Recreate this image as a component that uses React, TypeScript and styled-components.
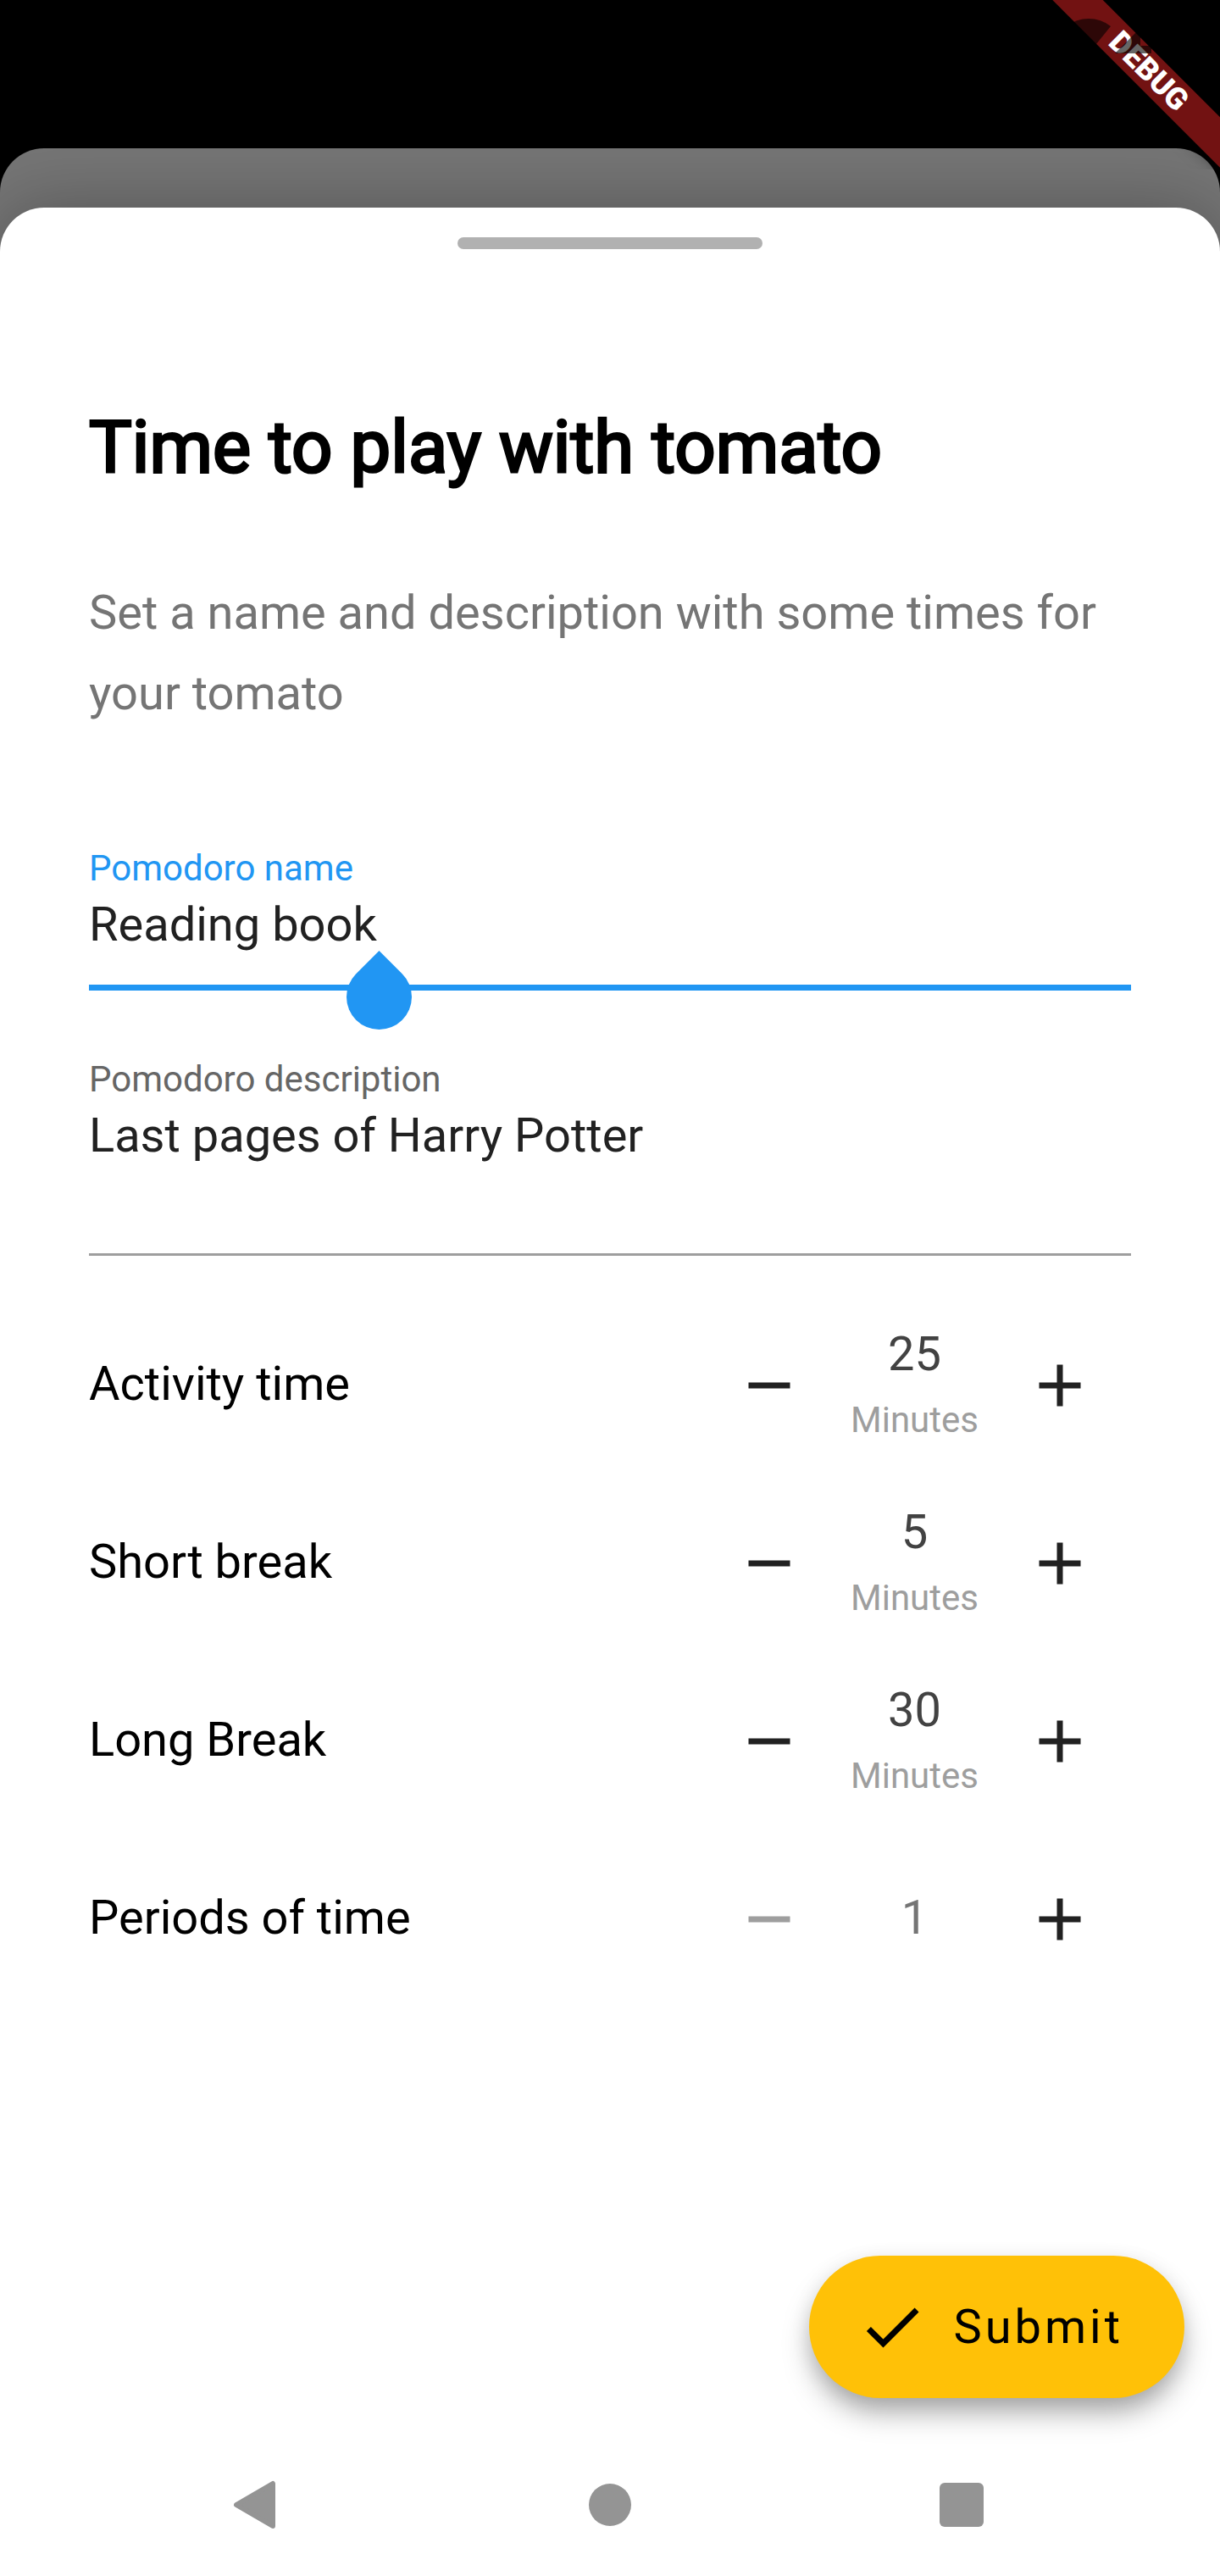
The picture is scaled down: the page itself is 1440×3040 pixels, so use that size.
import { useState } from "react";
import styled, { createGlobalStyle } from "styled-components";

const GlobalStyle = createGlobalStyle`
  *, *::before, *::after { box-sizing: border-box; }
  html, body, #root { height: 100%; }
  body { margin: 0; background: #000; font-family: Roboto, "Noto Sans", sans-serif; }
  button, input, textarea { font-family: inherit; }
`;

const Screen = styled.div`
  position: relative;
  display: flex;
  flex-direction: column;
  min-height: 100%;
  padding-top: 175px;
  background: #000;
  overflow: hidden;
`;

const Backdrop = styled.div`
  flex: 1;
  display: flex;
  flex-direction: column;
  padding-top: 70px;
  border-radius: 52px 52px 0 0;
  background: #757575;
  overflow: hidden;
`;

const Sheet = styled.main`
  flex: 1;
  display: flex;
  flex-direction: column;
  border-radius: 52px 52px 0 0;
  background: #fff;
  box-shadow: 0 0 84px rgba(0, 0, 0, 0.28);
`;

const Grabber = styled.div`
  width: 25%;
  height: 14px;
  margin: 35px auto 0;
  border-radius: 7px;
  background: #b1b1b1;
`;

const Form = styled.form`
  flex: 1;
  display: flex;
  flex-direction: column;
`;

const Content = styled.div`
  display: flex;
  flex-direction: column;
  padding: 182px 105px 0;
`;

const Title = styled.h1`
  margin: 0;
  color: #000;
  font-size: 85px;
  font-weight: 400;
  line-height: 104px;
  -webkit-text-stroke: 3px #000;
`;

const Intro = styled.p`
  margin: 96px 0 0;
  color: #757575;
  font-size: 56px;
  line-height: 95px;
`;

const Field = styled.div<{ $focused?: boolean }>`
  position: relative;
  display: flex;
  flex-direction: column;
  border-bottom: ${(p) => (p.$focused ? "7px solid #2196f3" : "3px solid #9e9e9e")};
`;

const FieldLabel = styled.label<{ $focused?: boolean }>`
  color: ${(p) => (p.$focused ? "#2196f3" : "#666")};
  font-size: 42px;
  line-height: 50px;
`;

const Fields = styled.div`
  display: flex;
  flex-direction: column;
  gap: 80px;
  margin-top: 134px;
`;

const TextInput = styled.input`
  width: 100%;
  height: 112px;
  padding: 0 0 30px;
  border: 0;
  outline: 0;
  background: transparent;
  color: #212121;
  font-size: 56px;
  line-height: 66px;
`;

const TextArea = styled.textarea`
  width: 100%;
  height: 180px;
  padding: 8px 0 0;
  border: 0;
  outline: 0;
  resize: none;
  overflow: hidden;
  background: transparent;
  color: #212121;
  font-size: 56px;
  line-height: 66px;
`;

const CaretHandle = styled.span`
  position: absolute;
  left: 304px;
  top: 138px;
  width: 77px;
  height: 77px;
  border-radius: 0 50% 50% 50%;
  background: #2196f3;
  transform: rotate(45deg);
`;

const Rows = styled.div`
  display: flex;
  flex-direction: column;
  margin-top: 48px;
`;

const Row = styled.div`
  display: flex;
  align-items: center;
  justify-content: space-between;
  height: 210px;
`;

const RowLabel = styled.span`
  padding-bottom: 4px;
  color: #000;
  font-size: 56px;
  line-height: 66px;
`;

const Stepper = styled.div`
  display: grid;
  grid-template-columns: 168px 175px 168px;
  align-items: center;
`;

const StepButton = styled.button`
  display: flex;
  align-items: center;
  justify-content: center;
  height: 168px;
  padding: 0;
  border: 0;
  background: transparent;
  color: #212121;
  cursor: pointer;

  &:disabled {
    color: #9e9e9e;
    cursor: default;
  }
`;

const Value = styled.output<{ $muted: boolean }>`
  display: flex;
  flex-direction: column;
  align-items: center;
  gap: 20px;
  padding-bottom: 4px;
  color: ${(p) => (p.$muted ? "#757575" : "#424242")};
  font-size: 56px;
  line-height: 66px;
`;

const Unit = styled.span`
  color: #9e9e9e;
  font-size: 42px;
  line-height: 50px;
`;

const Footer = styled.div`
  display: flex;
  justify-content: flex-end;
  margin-top: auto;
  padding: 0 42px 42px;
`;

const SubmitButton = styled.button`
  display: flex;
  align-items: center;
  gap: 30px;
  height: 168px;
  padding: 0 72px 0 56px;
  border: 0;
  border-radius: 84px;
  background: #ffc107;
  box-shadow: 0 20px 34px -4px rgba(0, 0, 0, 0.34), 0 4px 24px rgba(0, 0, 0, 0.08);
  color: #000;
  font-size: 56px;
  line-height: 66px;
  letter-spacing: 4px;
  cursor: pointer;
`;

const NavBar = styled.nav`
  display: grid;
  grid-template-columns: repeat(3, 1fr);
  height: 168px;
  padding: 0 98px;
`;

const NavButton = styled.button`
  display: flex;
  align-items: center;
  justify-content: center;
  padding: 0;
  border: 0;
  background: transparent;
  color: #949494;
`;

const Corner = styled.div`
  position: absolute;
  top: 0;
  right: 0;
  width: 200px;
  height: 200px;
  overflow: hidden;
`;

const Ribbon = styled.div`
  position: absolute;
  top: 63px;
  left: -34px;
  width: 300px;
  height: 42px;
  background: #721212;
  box-shadow: 0 0 20px rgba(0, 0, 0, 0.5);
  color: #fff;
  font-size: 36px;
  font-weight: 900;
  line-height: 42px;
  text-align: center;
  transform: rotate(45deg);
`;

const StatusIcons = styled.svg`
  position: absolute;
  top: 0;
  left: 0;
`;

const PATHS = {
  minus: "M19 13H5v-2h14v2z",
  plus: "M19 13h-6v6h-2v-6H5v-2h6V5h2v6h6v2z",
  check: "M9 16.17L4.83 12l-1.42 1.41L9 19 21 7l-1.41-1.41z",
};

function Icon({ name }: { name: keyof typeof PATHS }) {
  return (
    <svg width="84" height="84" viewBox="0 0 24 24" fill="currentColor" aria-hidden="true">
      <path d={PATHS[name]} />
    </svg>
  );
}

interface StepperRowProps {
  label: string;
  initial: number;
  unit?: string;
}

function StepperRow({ label, initial, unit }: StepperRowProps) {
  const [value, setValue] = useState(initial);
  return (
    <Row role="group" aria-label={label}>
      <RowLabel>{label}</RowLabel>
      <Stepper>
        <StepButton
          type="button"
          aria-label={`Decrease ${label}`}
          disabled={value <= 1}
          onClick={() => setValue(value - 1)}
        >
          <Icon name="minus" />
        </StepButton>
        <Value $muted={!unit}>
          {value}
          {unit && <Unit>{unit}</Unit>}
        </Value>
        <StepButton type="button" aria-label={`Increase ${label}`} onClick={() => setValue(value + 1)}>
          <Icon name="plus" />
        </StepButton>
      </Stepper>
    </Row>
  );
}

function DebugBanner() {
  return (
    <Corner>
      <Ribbon>DEBUG</Ribbon>
      <StatusIcons width="200" height="200" viewBox="0 0 200 200" fill="rgba(0,0,0,0.6)" aria-hidden="true">
        <path d="M19 31a42 42 0 0 1 52 0L45 63z" />
        <path d="M76 63L106 33V63z" />
        <path d="M106 54h13v9h-13z" />
      </StatusIcons>
    </Corner>
  );
}

export default function App() {
  return (
    <>
      <GlobalStyle />
      <Screen>
        <Backdrop>
          <Sheet>
            <Grabber />
            <Form onSubmit={(e) => e.preventDefault()}>
              <Content>
                <Title>Time to play with tomato</Title>
                <Intro>Set a name and description with some times for your tomato</Intro>
                <Fields>
                  <Field $focused>
                    <FieldLabel $focused htmlFor="name">Pomodoro name</FieldLabel>
                    <TextInput id="name" defaultValue="Reading book" />
                    <CaretHandle />
                  </Field>
                  <Field>
                    <FieldLabel htmlFor="description">Pomodoro description</FieldLabel>
                    <TextArea id="description" defaultValue="Last pages of Harry Potter" />
                  </Field>
                </Fields>
                <Rows>
                  <StepperRow label="Activity time" initial={25} unit="Minutes" />
                  <StepperRow label="Short break" initial={5} unit="Minutes" />
                  <StepperRow label="Long Break" initial={30} unit="Minutes" />
                  <StepperRow label="Periods of time" initial={1} />
                </Rows>
              </Content>
              <Footer>
                <SubmitButton type="submit">
                  <Icon name="check" />
                  Submit
                </SubmitButton>
              </Footer>
            </Form>
            <NavBar aria-label="System navigation">
              <NavButton type="button" aria-label="Back">
                <svg width="60" height="60" viewBox="0 0 60 60" fill="currentColor" stroke="currentColor" strokeWidth="6" strokeLinejoin="round">
                  <path d="M4 30L47 5V55z" />
                </svg>
              </NavButton>
              <NavButton type="button" aria-label="Home">
                <svg width="60" height="60" viewBox="0 0 60 60" fill="currentColor">
                  <circle cx="30" cy="30" r="25" />
                </svg>
              </NavButton>
              <NavButton type="button" aria-label="Recent apps">
                <svg width="60" height="60" viewBox="0 0 60 60" fill="currentColor">
                  <rect x="4" y="4" width="52" height="52" rx="6" />
                </svg>
              </NavButton>
            </NavBar>
          </Sheet>
        </Backdrop>
        <DebugBanner />
      </Screen>
    </>
  );
}
